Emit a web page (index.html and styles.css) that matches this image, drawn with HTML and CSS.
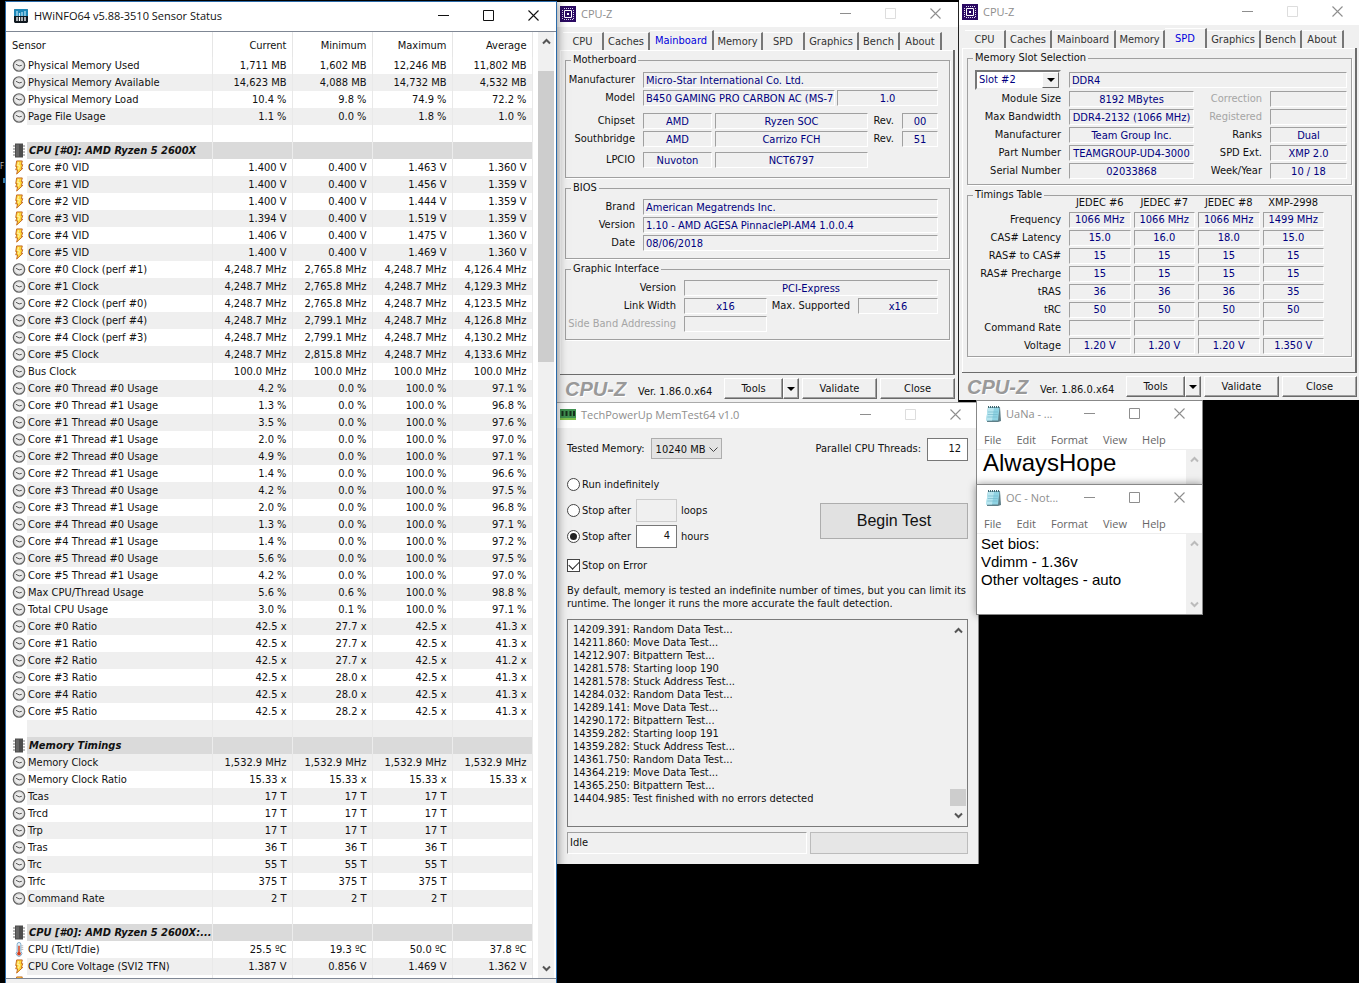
FILE: index.html
```html
<!DOCTYPE html>
<html lang="en">
<head>
<meta charset="utf-8">
<title>Desktop</title>
<link rel="stylesheet" href="styles.css">
</head>
<body>
<svg class="defs" aria-hidden="true">
  <symbol id="min" viewBox="0 0 11 11"><path d="M0 5.5h11" stroke="currentColor" fill="none"/></symbol>
  <symbol id="max" viewBox="0 0 11 11"><path d="M.5 .5h10v10h-10z" stroke="currentColor" fill="none"/></symbol>
  <symbol id="x" viewBox="0 0 11 11"><path d="M.5 .5l10 10M10.5 .5l-10 10" stroke="currentColor" stroke-width="1.1" fill="none"/></symbol>
  <symbol id="up" viewBox="0 0 9 7"><path d="M1 5.5l3.500-3.500 3.500 3.500" stroke="currentColor" stroke-width="2" fill="none"/></symbol>
  <symbol id="down" viewBox="0 0 9 7"><path d="M1 1.500l3.500 3.500 3.500-3.500" stroke="currentColor" stroke-width="2" fill="none"/></symbol>
  <symbol id="clock" viewBox="0 0 14 14"><circle cx="7" cy="7" r="5.600" fill="#ececec" stroke="#666" stroke-width="1.400"/><circle cx="7" cy="7" r="4.300" fill="none" stroke="#cfcfcf" stroke-width=".8"/><path d="M4 5.800l3.200 1.600 2.600-.6" stroke="#555" fill="none"/></symbol>
  <symbol id="bolt" viewBox="0 0 14 16"><path d="M4.500 1h6L9.500 5h1.500L9.500 9h1.500L4.500 15l1-4.500H3.500L4.800 7H3.500z" fill="#ffd83a" stroke="#c2641c" stroke-linejoin="round"/><path d="M6.500 2.500L5.500 6H7.500L6.500 10" stroke="#fff6b8" fill="none"/></symbol>
  <symbol id="chip" viewBox="0 0 14 14"><path d="M1 2.500h12M1 5.500h12M1 8.500h12M1 11.500h12" stroke="#a2a2a2" stroke-width="1.400"/><path d="M3 0h8v14H3z" fill="#4c4c4c"/><path d="M4 1h3v12H4z" fill="#656565"/></symbol>
  <symbol id="therm" viewBox="0 0 14 16"><path d="M5 2.500a2 2 0 0 1 4 0V10a3 3 0 1 1-4 0z" fill="#e6f2fb" stroke="#7aa6c8"/><path d="M7 4v8" stroke="#d3401e" stroke-width="1.600"/><circle cx="7" cy="12.300" r="2" fill="#d3401e"/><path d="M9.500 4h2M9.500 6h2M9.500 8h2" stroke="#999" stroke-width=".7"/></symbol>
  <symbol id="cpuz" viewBox="0 0 16 16"><path d="M0 0h16v16H0z" fill="#2b0a63"/><path d="M4.500 4.500h7v7h-7z" fill="none" stroke="#fff"/><path d="M7 7h2v2H7z" fill="#fff"/><path d="M4 2.500h9M4 13.500h9" stroke="#e4dcf4" stroke-dasharray="1 1"/><path d="M2.500 4v9M13.500 4v9" stroke="#e4dcf4" stroke-dasharray="1 1"/></symbol>
  <symbol id="note" viewBox="0 0 18 18"><path d="M4 2h12l1 14-3 1H3z" fill="#5f7f88"/><path d="M4 2.500h11.500L14 15.500H2z" fill="#8fd3e3"/><path d="M4 3h6L8 15.500H2z" fill="#b8e6f0"/><path d="M4 7h10M3.700 9.500h10M3.300 12h10" stroke="#74b9cc" stroke-width=".7"/><path d="M4 2h12" stroke="#3f6670" stroke-width="2" stroke-dasharray="1 1"/></symbol>
</svg>

<main class="desktop">
<div class="shortcut"><span>F</span><i></i></div>

<section class="window hwinfo" aria-label="HWiNFO64 Sensor Status">
  <header class="titlebar">
    <svg class="app" viewBox="0 0 14 14"><path d="M1 0h12l1 1v12l-1 1H1l-1-1V1z" fill="#101820"/><path d="M1 0h12l1 1v6H0V1z" fill="#1d87b8"/><path d="M3 2v5M5.500 4v3M8 3v4M11 2v5" stroke="#bfe8f8" stroke-width="1.200"/><path d="M3 8v4M5.500 8v4M8 8v4M11 8v4" stroke="#fff" stroke-width="1.300"/></svg>
    <h1>HWiNFO64 v5.88-3510 Sensor Status</h1>
    <div class="caption"><button aria-label="Minimize"><svg><use href="#min"/></svg></button><button aria-label="Maximize"><svg><use href="#max"/></svg></button><button aria-label="Close"><svg><use href="#x"/></svg></button></div>
  </header>
  <div class="sensor-view">
    <div class="sensor-list">
    <table class="sensors">
      <colgroup><col class="c-icon"><col class="c-name"><col class="c-val"><col class="c-val"><col class="c-val"><col class="c-val"></colgroup>
      <thead><tr><th colspan="2">Sensor</th><th>Current</th><th>Minimum</th><th>Maximum</th><th>Average</th></tr></thead>
      <tbody>
      <tr><td><svg><use href="#clock"/></svg></td><td>Physical Memory Used</td><td>1,711 MB</td><td>1,602 MB</td><td>12,246 MB</td><td>11,802 MB</td></tr>
      <tr><td><svg><use href="#clock"/></svg></td><td>Physical Memory Available</td><td>14,623 MB</td><td>4,088 MB</td><td>14,732 MB</td><td>4,532 MB</td></tr>
      <tr><td><svg><use href="#clock"/></svg></td><td>Physical Memory Load</td><td>10.4 %</td><td>9.8 %</td><td>74.9 %</td><td>72.2 %</td></tr>
      <tr><td><svg><use href="#clock"/></svg></td><td>Page File Usage</td><td>1.1 %</td><td>0.0 %</td><td>1.8 %</td><td>1.0 %</td></tr>
      <tr><td></td><td></td><td></td><td></td><td></td><td></td></tr>
      <tr class="group"><td><svg><use href="#chip"/></svg></td><td>CPU [#0]: AMD Ryzen 5 2600X</td><td></td><td></td><td></td><td></td></tr>
      <tr><td><svg><use href="#bolt"/></svg></td><td>Core #0 VID</td><td>1.400 V</td><td>0.400 V</td><td>1.463 V</td><td>1.360 V</td></tr>
      <tr><td><svg><use href="#bolt"/></svg></td><td>Core #1 VID</td><td>1.400 V</td><td>0.400 V</td><td>1.456 V</td><td>1.359 V</td></tr>
      <tr><td><svg><use href="#bolt"/></svg></td><td>Core #2 VID</td><td>1.400 V</td><td>0.400 V</td><td>1.444 V</td><td>1.359 V</td></tr>
      <tr><td><svg><use href="#bolt"/></svg></td><td>Core #3 VID</td><td>1.394 V</td><td>0.400 V</td><td>1.519 V</td><td>1.359 V</td></tr>
      <tr><td><svg><use href="#bolt"/></svg></td><td>Core #4 VID</td><td>1.406 V</td><td>0.400 V</td><td>1.475 V</td><td>1.360 V</td></tr>
      <tr><td><svg><use href="#bolt"/></svg></td><td>Core #5 VID</td><td>1.400 V</td><td>0.400 V</td><td>1.469 V</td><td>1.360 V</td></tr>
      <tr><td><svg><use href="#clock"/></svg></td><td>Core #0 Clock (perf #1)</td><td>4,248.7 MHz</td><td>2,765.8 MHz</td><td>4,248.7 MHz</td><td>4,126.4 MHz</td></tr>
      <tr><td><svg><use href="#clock"/></svg></td><td>Core #1 Clock</td><td>4,248.7 MHz</td><td>2,765.8 MHz</td><td>4,248.7 MHz</td><td>4,129.3 MHz</td></tr>
      <tr><td><svg><use href="#clock"/></svg></td><td>Core #2 Clock (perf #0)</td><td>4,248.7 MHz</td><td>2,765.8 MHz</td><td>4,248.7 MHz</td><td>4,123.5 MHz</td></tr>
      <tr><td><svg><use href="#clock"/></svg></td><td>Core #3 Clock (perf #4)</td><td>4,248.7 MHz</td><td>2,799.1 MHz</td><td>4,248.7 MHz</td><td>4,126.8 MHz</td></tr>
      <tr><td><svg><use href="#clock"/></svg></td><td>Core #4 Clock (perf #3)</td><td>4,248.7 MHz</td><td>2,799.1 MHz</td><td>4,248.7 MHz</td><td>4,130.2 MHz</td></tr>
      <tr><td><svg><use href="#clock"/></svg></td><td>Core #5 Clock</td><td>4,248.7 MHz</td><td>2,815.8 MHz</td><td>4,248.7 MHz</td><td>4,133.6 MHz</td></tr>
      <tr><td><svg><use href="#clock"/></svg></td><td>Bus Clock</td><td>100.0 MHz</td><td>100.0 MHz</td><td>100.0 MHz</td><td>100.0 MHz</td></tr>
      <tr><td><svg><use href="#clock"/></svg></td><td>Core #0 Thread #0 Usage</td><td>4.2 %</td><td>0.0 %</td><td>100.0 %</td><td>97.1 %</td></tr>
      <tr><td><svg><use href="#clock"/></svg></td><td>Core #0 Thread #1 Usage</td><td>1.3 %</td><td>0.0 %</td><td>100.0 %</td><td>96.8 %</td></tr>
      <tr><td><svg><use href="#clock"/></svg></td><td>Core #1 Thread #0 Usage</td><td>3.5 %</td><td>0.0 %</td><td>100.0 %</td><td>97.6 %</td></tr>
      <tr><td><svg><use href="#clock"/></svg></td><td>Core #1 Thread #1 Usage</td><td>2.0 %</td><td>0.0 %</td><td>100.0 %</td><td>97.0 %</td></tr>
      <tr><td><svg><use href="#clock"/></svg></td><td>Core #2 Thread #0 Usage</td><td>4.9 %</td><td>0.0 %</td><td>100.0 %</td><td>97.1 %</td></tr>
      <tr><td><svg><use href="#clock"/></svg></td><td>Core #2 Thread #1 Usage</td><td>1.4 %</td><td>0.0 %</td><td>100.0 %</td><td>96.6 %</td></tr>
      <tr><td><svg><use href="#clock"/></svg></td><td>Core #3 Thread #0 Usage</td><td>4.2 %</td><td>0.0 %</td><td>100.0 %</td><td>97.5 %</td></tr>
      <tr><td><svg><use href="#clock"/></svg></td><td>Core #3 Thread #1 Usage</td><td>2.0 %</td><td>0.0 %</td><td>100.0 %</td><td>96.8 %</td></tr>
      <tr><td><svg><use href="#clock"/></svg></td><td>Core #4 Thread #0 Usage</td><td>1.3 %</td><td>0.0 %</td><td>100.0 %</td><td>97.1 %</td></tr>
      <tr><td><svg><use href="#clock"/></svg></td><td>Core #4 Thread #1 Usage</td><td>1.4 %</td><td>0.0 %</td><td>100.0 %</td><td>97.2 %</td></tr>
      <tr><td><svg><use href="#clock"/></svg></td><td>Core #5 Thread #0 Usage</td><td>5.6 %</td><td>0.0 %</td><td>100.0 %</td><td>97.5 %</td></tr>
      <tr><td><svg><use href="#clock"/></svg></td><td>Core #5 Thread #1 Usage</td><td>4.2 %</td><td>0.0 %</td><td>100.0 %</td><td>97.0 %</td></tr>
      <tr><td><svg><use href="#clock"/></svg></td><td>Max CPU/Thread Usage</td><td>5.6 %</td><td>0.6 %</td><td>100.0 %</td><td>98.8 %</td></tr>
      <tr><td><svg><use href="#clock"/></svg></td><td>Total CPU Usage</td><td>3.0 %</td><td>0.1 %</td><td>100.0 %</td><td>97.1 %</td></tr>
      <tr><td><svg><use href="#clock"/></svg></td><td>Core #0 Ratio</td><td>42.5 x</td><td>27.7 x</td><td>42.5 x</td><td>41.3 x</td></tr>
      <tr><td><svg><use href="#clock"/></svg></td><td>Core #1 Ratio</td><td>42.5 x</td><td>27.7 x</td><td>42.5 x</td><td>41.3 x</td></tr>
      <tr><td><svg><use href="#clock"/></svg></td><td>Core #2 Ratio</td><td>42.5 x</td><td>27.7 x</td><td>42.5 x</td><td>41.2 x</td></tr>
      <tr><td><svg><use href="#clock"/></svg></td><td>Core #3 Ratio</td><td>42.5 x</td><td>28.0 x</td><td>42.5 x</td><td>41.3 x</td></tr>
      <tr><td><svg><use href="#clock"/></svg></td><td>Core #4 Ratio</td><td>42.5 x</td><td>28.0 x</td><td>42.5 x</td><td>41.3 x</td></tr>
      <tr><td><svg><use href="#clock"/></svg></td><td>Core #5 Ratio</td><td>42.5 x</td><td>28.2 x</td><td>42.5 x</td><td>41.3 x</td></tr>
      <tr><td></td><td></td><td></td><td></td><td></td><td></td></tr>
      <tr class="group"><td><svg><use href="#chip"/></svg></td><td>Memory Timings</td><td></td><td></td><td></td><td></td></tr>
      <tr><td><svg><use href="#clock"/></svg></td><td>Memory Clock</td><td>1,532.9 MHz</td><td>1,532.9 MHz</td><td>1,532.9 MHz</td><td>1,532.9 MHz</td></tr>
      <tr><td><svg><use href="#clock"/></svg></td><td>Memory Clock Ratio</td><td>15.33 x</td><td>15.33 x</td><td>15.33 x</td><td>15.33 x</td></tr>
      <tr><td><svg><use href="#clock"/></svg></td><td>Tcas</td><td>17 T</td><td>17 T</td><td>17 T</td><td></td></tr>
      <tr><td><svg><use href="#clock"/></svg></td><td>Trcd</td><td>17 T</td><td>17 T</td><td>17 T</td><td></td></tr>
      <tr><td><svg><use href="#clock"/></svg></td><td>Trp</td><td>17 T</td><td>17 T</td><td>17 T</td><td></td></tr>
      <tr><td><svg><use href="#clock"/></svg></td><td>Tras</td><td>36 T</td><td>36 T</td><td>36 T</td><td></td></tr>
      <tr><td><svg><use href="#clock"/></svg></td><td>Trc</td><td>55 T</td><td>55 T</td><td>55 T</td><td></td></tr>
      <tr><td><svg><use href="#clock"/></svg></td><td>Trfc</td><td>375 T</td><td>375 T</td><td>375 T</td><td></td></tr>
      <tr><td><svg><use href="#clock"/></svg></td><td>Command Rate</td><td>2 T</td><td>2 T</td><td>2 T</td><td></td></tr>
      <tr><td></td><td></td><td></td><td></td><td></td><td></td></tr>
      <tr class="group"><td><svg><use href="#chip"/></svg></td><td>CPU [#0]: AMD Ryzen 5 2600X:...</td><td></td><td></td><td></td><td></td></tr>
      <tr><td><svg><use href="#therm"/></svg></td><td>CPU (Tctl/Tdie)</td><td>25.5 ºC</td><td>19.3 ºC</td><td>50.0 ºC</td><td>37.8 ºC</td></tr>
      <tr><td><svg><use href="#bolt"/></svg></td><td>CPU Core Voltage (SVI2 TFN)</td><td>1.387 V</td><td>0.856 V</td><td>1.469 V</td><td>1.362 V</td></tr>
      <tr><td><svg><use href="#bolt"/></svg></td><td></td><td></td><td></td><td></td><td></td></tr>
      </tbody>
    </table>
    </div>
    <div class="scroll main-scroll"><svg><use href="#up"/></svg><div class="track"><div class="thumb"></div></div><svg><use href="#down"/></svg></div>
  </div>
</section>

<section class="window cpuz mainboard" aria-label="CPU-Z Mainboard">
  <header class="titlebar inactive">
    <svg class="app"><use href="#cpuz"/></svg>
    <h1>CPU-Z</h1>
    <div class="caption"><button aria-label="Minimize"><svg><use href="#min"/></svg></button><button aria-label="Maximize" disabled><svg><use href="#max"/></svg></button><button aria-label="Close"><svg><use href="#x"/></svg></button></div>
  </header>
  <nav class="tabs" role="tablist"><button role="tab">CPU</button><button role="tab">Caches</button><button role="tab" aria-selected="true">Mainboard</button><button role="tab">Memory</button><button role="tab">SPD</button><button role="tab">Graphics</button><button role="tab">Bench</button><button role="tab">About</button></nav>
  <div class="panel">
    <fieldset>
      <legend>Motherboard</legend>
      <div class="form board">
        <label for="mf">Manufacturer</label><input class="all" id="mf" readonly value="Micro-Star International Co. Ltd.">
        <label for="md">Model</label><div class="all model"><input id="md" readonly value="B450 GAMING PRO CARBON AC (MS-7"><input class="mid" aria-label="Model revision" readonly value="1.0"></div>
        <label class="gap" for="cs">Chipset</label><input class="mid gap" id="cs" readonly value="AMD"><input class="mid gap" aria-label="Chipset model" readonly value="Ryzen SOC"><label class="gap" for="r1">Rev.</label><input class="mid gap" id="r1" readonly value="00">
        <label for="sb">Southbridge</label><input class="mid" id="sb" readonly value="AMD"><input class="mid" aria-label="Southbridge model" readonly value="Carrizo FCH"><label for="r2">Rev.</label><input class="mid" id="r2" readonly value="51">
        <label class="lpc" for="lp">LPCIO</label><input class="mid lpc" id="lp" readonly value="Nuvoton"><input class="mid lpc" aria-label="LPCIO model" readonly value="NCT6797">
      </div>
    </fieldset>
    <fieldset>
      <legend>BIOS</legend>
      <div class="form bios">
        <label for="br">Brand</label><input id="br" readonly value="American Megatrends Inc.">
        <label for="ve">Version</label><input id="ve" readonly value="1.10 - AMD AGESA PinnaclePI-AM4 1.0.0.4">
        <label for="da">Date</label><input id="da" readonly value="08/06/2018">
      </div>
    </fieldset>
    <fieldset>
      <legend>Graphic Interface</legend>
      <div class="form graphic">
        <label for="gv">Version</label><input class="mid all" id="gv" readonly value="PCI-Express">
        <label for="lw">Link Width</label><input class="mid" id="lw" readonly value="x16"><label for="ms">Max. Supported</label><input class="mid" id="ms" readonly value="x16">
        <label class="off" for="sba">Side Band Addressing</label><input id="sba" disabled>
      </div>
    </fieldset>
  </div>
  <footer class="bar"><strong>CPU-Z</strong><span>Ver. 1.86.0.x64</span><div class="split"><button>Tools</button><button aria-label="Tools menu"><i></i></button></div><button>Validate</button><button>Close</button></footer>
</section>

<section class="window cpuz spd" aria-label="CPU-Z SPD">
  <header class="titlebar inactive">
    <svg class="app"><use href="#cpuz"/></svg>
    <h1>CPU-Z</h1>
    <div class="caption"><button aria-label="Minimize"><svg><use href="#min"/></svg></button><button aria-label="Maximize" disabled><svg><use href="#max"/></svg></button><button aria-label="Close"><svg><use href="#x"/></svg></button></div>
  </header>
  <nav class="tabs" role="tablist"><button role="tab">CPU</button><button role="tab">Caches</button><button role="tab">Mainboard</button><button role="tab">Memory</button><button role="tab" aria-selected="true">SPD</button><button role="tab">Graphics</button><button role="tab">Bench</button><button role="tab">About</button></nav>
  <div class="panel">
    <fieldset>
      <legend>Memory Slot Selection</legend>
      <div class="slot">
        <div class="slot-select"><select aria-label="Memory slot"><option>Slot #2</option></select><b><i></i></b></div>
        <input aria-label="Memory type" readonly value="DDR4">
      </div>
      <div class="form module">
        <label for="sz">Module Size</label><input class="mid" id="sz" readonly value="8192 MBytes"><label class="off" for="co">Correction</label><input id="co" disabled>
        <label for="bw">Max Bandwidth</label><input class="mid" id="bw" readonly value="DDR4-2132 (1066 MHz)"><label class="off" for="rg">Registered</label><input id="rg" disabled>
        <label for="mm">Manufacturer</label><input class="mid" id="mm" readonly value="Team Group Inc."><label for="ra">Ranks</label><input class="mid" id="ra" readonly value="Dual">
        <label for="pn">Part Number</label><input class="mid" id="pn" readonly value="TEAMGROUP-UD4-3000"><label for="ex">SPD Ext.</label><input class="mid" id="ex" readonly value="XMP 2.0">
        <label for="sn">Serial Number</label><input class="mid" id="sn" readonly value="02033868"><label for="wk">Week/Year</label><input class="mid" id="wk" readonly value="10 / 18">
      </div>
    </fieldset>
    <fieldset class="timing-box">
      <legend>Timings Table</legend>
      <table class="timings">
        <thead><tr><td></td><th>JEDEC #6</th><th>JEDEC #7</th><th>JEDEC #8</th><th>XMP-2998</th></tr></thead>
        <tbody>
        <tr><th>Frequency</th><td>1066 MHz</td><td>1066 MHz</td><td>1066 MHz</td><td>1499 MHz</td></tr>
        <tr><th>CAS# Latency</th><td>15.0</td><td>16.0</td><td>18.0</td><td>15.0</td></tr>
        <tr><th>RAS# to CAS#</th><td>15</td><td>15</td><td>15</td><td>15</td></tr>
        <tr><th>RAS# Precharge</th><td>15</td><td>15</td><td>15</td><td>15</td></tr>
        <tr><th>tRAS</th><td>36</td><td>36</td><td>36</td><td>35</td></tr>
        <tr><th>tRC</th><td>50</td><td>50</td><td>50</td><td>50</td></tr>
        <tr><th>Command Rate</th><td></td><td></td><td></td><td></td></tr>
        <tr><th>Voltage</th><td>1.20 V</td><td>1.20 V</td><td>1.20 V</td><td>1.350 V</td></tr>
        </tbody>
      </table>
    </fieldset>
  </div>
  <footer class="bar"><strong>CPU-Z</strong><span>Ver. 1.86.0.x64</span><div class="split"><button>Tools</button><button aria-label="Tools menu"><i></i></button></div><button>Validate</button><button>Close</button></footer>
</section>

<section class="window memtest" aria-label="TechPowerUp MemTest64">
  <header class="titlebar inactive">
    <svg class="app" viewBox="0 0 16 16"><path d="M0 2h16v10H0z" fill="#3f9150"/><path d="M0 11h16v2H0z" fill="#7cc04b"/><path d="M1.500 4h2v5h-2zM5.500 4h2v5h-2zM9.500 4h2v5h-2zM13 4h2v5h-2z" fill="#17301c"/></svg>
    <h1>TechPowerUp MemTest64 v1.0</h1>
    <div class="caption"><button aria-label="Minimize"><svg><use href="#min"/></svg></button><button aria-label="Maximize" disabled><svg><use href="#max"/></svg></button><button aria-label="Close"><svg><use href="#x"/></svg></button></div>
  </header>
  <div class="memtest-body">
    <div class="top-row">
      <label for="tm">Tested Memory:</label>
      <div class="drop"><select id="tm"><option>10240 MB</option></select><svg viewBox="0 0 9 7"><path d="M.5 1.500l4 4 4-4" stroke="#444" fill="none"/></svg></div>
      <label class="threads" for="pt">Parallel CPU Threads:</label><input class="num" id="pt" value="12">
    </div>
    <div class="run-row">
      <div class="modes">
        <label><input type="radio" name="mode">Run indefinitely</label>
        <div class="mode"><label><input type="radio" name="mode">Stop after</label><input class="num" aria-label="Loops" disabled><span>loops</span></div>
        <div class="mode"><label><input type="radio" name="mode" checked>Stop after</label><input class="num" aria-label="Hours" value="4"><span>hours</span></div>
        <label class="err"><input type="checkbox" checked>Stop on Error</label>
      </div>
      <button class="begin">Begin Test</button>
    </div>
    <p>By default, memory is tested an indefinite number of times, but you can limit its<br>runtime. The longer it runs the more accurate the fault detection.</p>
    <div class="log">
      <textarea aria-label="Log" readonly>14209.391: Random Data Test...
14211.860: Move Data Test...
14212.907: Bitpattern Test...
14281.578: Starting loop 190
14281.578: Stuck Address Test...
14284.032: Random Data Test...
14289.141: Move Data Test...
14290.172: Bitpattern Test...
14359.282: Starting loop 191
14359.282: Stuck Address Test...
14361.750: Random Data Test...
14364.219: Move Data Test...
14365.250: Bitpattern Test...
14404.985: Test finished with no errors detected</textarea>
      <div class="scroll log-scroll"><svg><use href="#up"/></svg><div class="track"><div class="thumb"></div></div><svg><use href="#down"/></svg></div>
    </div>
    <div class="status"><output>Idle</output><div class="progress" role="progressbar" aria-label="Progress"></div></div>
  </div>
</section>

<section class="window notepad first" aria-label="UaNa - Notepad">
  <header class="titlebar inactive">
    <svg class="app"><use href="#note"/></svg><h1>UaNa - ...</h1>
    <div class="caption"><button aria-label="Minimize"><svg><use href="#min"/></svg></button><button aria-label="Maximize"><svg><use href="#max"/></svg></button><button aria-label="Close"><svg><use href="#x"/></svg></button></div>
  </header>
  <nav class="menu"><button>File</button><button>Edit</button><button>Format</button><button>View</button><button>Help</button></nav>
  <div class="page"><textarea class="big" aria-label="Text">AlwaysHope</textarea><div class="scroll pale"><svg><use href="#up"/></svg><div class="track"></div></div></div>
</section>

<section class="window notepad second" aria-label="OC - Notepad">
  <header class="titlebar inactive">
    <svg class="app"><use href="#note"/></svg><h1>OC - Not...</h1>
    <div class="caption"><button aria-label="Minimize"><svg><use href="#min"/></svg></button><button aria-label="Maximize"><svg><use href="#max"/></svg></button><button aria-label="Close"><svg><use href="#x"/></svg></button></div>
  </header>
  <nav class="menu"><button>File</button><button>Edit</button><button>Format</button><button>View</button><button>Help</button></nav>
  <div class="page"><textarea aria-label="Text">Set bios:
Vdimm - 1.36v
Other voltages - auto</textarea><div class="scroll pale"><svg><use href="#up"/></svg><div class="track"></div><svg><use href="#down"/></svg></div></div>
</section>
</main>
</body>
</html>
```
FILE: styles.css
```css
* { box-sizing: border-box; }
html, body { height: 100%; margin: 0; }
body {
  background: #000;
  color: #111;
  font: 11px/14px "DejaVu Sans Condensed", "DejaVu Sans", sans-serif;
  overflow: hidden;
}
button, input, select, textarea { font: inherit; color: inherit; margin: 0; }
button { border: 0; background: none; padding: 0; }
.defs { position: absolute; width: 0; height: 0; }

.desktop { position: relative; height: 100%; min-height: 983px; }
.shortcut { position: absolute; left: 0; top: 160px; font-size: 8px; color: #ccc; }
.shortcut i { display: block; width: 2px; height: 5px; margin: 4px 0 0 3px; background: #4a9bd0; }

.window { position: absolute; display: flex; flex-direction: column; }

/* Title bars */
.titlebar {
  display: flex;
  align-items: center;
  gap: 5px;
  height: 25px;
  padding: 0 0 2px 3px;
  background: #fff;
  flex: none;
}
.titlebar h1 {
  flex: 1;
  margin: 0;
  font: 11px/16px "Open Sans", "Noto Sans", sans-serif;
  white-space: nowrap;
}
.app { width: 16px; height: 16px; flex: none; }
.caption { display: flex; }
.caption button { width: 45px; height: 23px; display: grid; place-items: center; }
.caption svg { width: 11px; height: 11px; }
.inactive { color: #8e8e8e; }
.inactive button:disabled { color: #ddd; }

/* Scroll bars */
.scroll { display: flex; flex-direction: column; align-items: center; width: 16px; flex: none; background: #f0f0f0; color: #555; }
.scroll svg { width: 9px; height: 7px; margin: 6px 0; flex: none; }
.scroll .track { flex: 1; align-self: stretch; display: flex; flex-direction: column; }
.scroll .thumb { background: #cdcdcd; }
.pale { color: #bbb; }

/* Sensor window */
.hwinfo {
  left: 5px; top: 1px; bottom: 0; width: 552px;
  z-index: 5;
  background: #f0f0f0;
  border: 1px solid #2a6aa9;
  border-bottom: 0;
  box-shadow: 0 0 10px rgba(0, 0, 0, .5);
}
.hwinfo .titlebar { height: 29px; padding-left: 8px; gap: 6px; }
.hwinfo .app { width: 14px; height: 14px; }
.sensor-view {
  flex: 1;
  min-height: 0;
  display: flex;
  margin-bottom: 4px;
  padding: 0 2px;
  background: #fff;
  border-top: 1px solid #7f8794;
  border-bottom: 1px solid #7f8794;
}
.sensor-list { flex: 1; overflow: hidden; }
.sensors { width: 524px; table-layout: fixed; border-collapse: collapse; }
.c-icon { width: 19px; }
.c-name { width: 185px; }
.c-val { width: 80px; }
.sensors th { height: 25px; padding: 3px 5px 0 4px; font-weight: normal; text-align: right; border-right: 1px solid #e6e6e6; }
.sensors th:first-child { text-align: left; }
.sensors td { height: 17px; padding: 0 5px 0 0; line-height: 17px; text-align: right; white-space: nowrap; border-right: 1px solid #e9e9e9; }
.sensors td:first-child { padding: 0 0 0 4px; border: 0; background: #fff; }
.sensors td:nth-child(2) { padding: 0 0 0 1px; text-align: left; }
.sensors td svg { display: block; width: 14px; height: 15px; }
.sensors tr:nth-child(even) td:not(:first-child) { background: #efefef; }
.sensors tr.group td:not(:first-child) { background: #dadada; border-color: #ececec; }
.sensors tr.group td:nth-child(2) { padding-left: 2px; font-weight: bold; font-style: italic; }
.main-scroll .track { padding-top: 20px; }
.main-scroll .thumb { height: 291px; }

/* CPU-Z windows */
.cpuz { background: #f0f0f0; width: 402px; }
.mainboard { left: 557px; top: 2px; border-right: 1px solid #222; }
.spd { left: 959px; top: 0; width: 401px; }
.tabs { display: flex; align-items: flex-end; height: 23px; padding-left: 6px; }
.tabs button { height: 18px; border-right: 2px solid #777; border-top: 1px solid #fff; color: #333; text-align: center; }
.tabs button:nth-child(1) { width: 41px; }
.tabs button:nth-child(2) { width: 46px; }
.tabs button:nth-child(3) { width: 64px; }
.tabs button:nth-child(4) { width: 49px; }
.tabs button:nth-child(5) { width: 42px; }
.tabs button:nth-child(6) { width: 54px; }
.tabs button:nth-child(7) { width: 41px; }
.tabs button:nth-child(8) { width: 42px; }
.tabs button[aria-selected] { height: 20px; color: #0000dc; }
.panel {
  display: flex;
  flex-direction: column;
  gap: 3px;
  height: 325px;
  margin: 0 3px;
  padding: 3px 3px 0 5px;
  border: solid #6c6c6c;
  border-width: 0 2px 1px 0;
  box-shadow: inset 1px 1px #fff;
}
fieldset {
  margin: 0;
  padding: 5px 11px 5px 0;
  min-width: 0;
  border: 1px solid #a0a0a0;
  box-shadow: 1px 1px #fff;
}
.mainboard fieldset:not(:first-child) { padding-top: 4px; padding-bottom: 7px; }
legend { margin-left: 5px; padding: 0 2px; line-height: 14px; }
.form { display: grid; gap: 2px 3px; }
.form label { text-align: right; line-height: 16px; padding-right: 5px; white-space: nowrap; }
.cpuz input, .timings tbody td {
  width: 100%;
  min-width: 0;
  height: 16px;
  padding: 0 0 0 2px;
  border: 1px solid;
  border-color: #a0a0a0 #fff #fff #a0a0a0;
  border-radius: 0;
  background: #f0f0f0;
  color: #00007f;
  line-height: 14px;
}
.cpuz input.mid { text-align: center; padding: 0; }
.form .off { color: #a5a5a5; }
.board { grid-template-columns: 74px 69px 1fr 28px 36px; padding-bottom: 4px; }
.board .all { grid-column: 2 / -1; }
.model { display: grid; grid-template-columns: 192px 1fr; gap: 2px; }
.form .gap { margin-top: 5px; }
.form .lpc { margin-top: 3px; }
.bios { grid-template-columns: 74px 1fr; }
.graphic { grid-template-columns: 115px 83px 1fr 80px; }
.graphic .all { grid-column: 2 / -1; }

.bar { display: flex; align-items: center; gap: 3px; height: 27px; padding: 0 3px 0 8px; }
.bar strong { width: 70px; font: italic bold 20px/24px "Liberation Sans", Arial, sans-serif; color: #999; text-shadow: 1px 1px #fff; }
.bar span { flex: 1; padding-top: 6px; white-space: nowrap; }
.bar button { width: 75px; height: 21px; background: #f0f0f0; border: 1px solid; border-color: #fff #696969 #696969 #fff; box-shadow: inset -1px -1px #a0a0a0; }
.split { display: flex; }
.split button:first-child { width: 59px; }
.split button:last-child { width: 16px; display: grid; place-items: center; }
.split i, .slot-select i { border: solid transparent; border-width: 4px 4px 0; border-top-color: #000; }

.slot { display: grid; grid-template-columns: 86px 1fr; gap: 8px; align-items: center; padding-left: 7px; margin-bottom: 1px; }
.slot-select { display: flex; height: 20px; border: 2px solid; border-color: #777 #eee #eee #777; background: #fff; }
.slot-select select { flex: 1; min-width: 0; appearance: none; border: 0; background: #fff; color: #00007f; padding: 0 2px; }
.slot-select b { display: grid; place-items: center; width: 17px; background: #f0f0f0; border: 1px solid; border-color: #fff #696969 #696969 #fff; }
.spd fieldset { padding-right: 4px; }
.module { grid-template-columns: 98px 125px 1fr 77px; }
.spd .timing-box { padding-top: 0; padding-bottom: 0; }
.timings { border-collapse: separate; border-spacing: 3px 2px; width: 362px; table-layout: fixed; margin: -8px 0 0 -3px; }
.timings th { font-weight: normal; padding: 0; line-height: 14px; white-space: nowrap; }
.timings thead td { width: 98px; }
.timings tbody th { text-align: right; padding-right: 5px; }
.timings tbody td { text-align: center; padding: 0; }

/* MemTest window */
.memtest { left: 557px; top: 402px; width: 422px; background: #f0f0f0; border-top: 1px solid #aaa; border-right: 1px solid #888; }
.memtest-body { padding: 10px 10px 10px; }
.top-row { display: flex; align-items: flex-start; line-height: 22px; }
.drop { position: relative; margin-left: 6px; }
.drop select { width: 71px; height: 21px; padding: 0 4px; appearance: none; background: #e3e3e3; border: 1px solid #adadad; border-radius: 0; }
.drop svg { position: absolute; right: 4px; top: 8px; width: 9px; height: 7px; }
.threads { margin-left: auto; }
.num { width: 41px; height: 23px; padding: 0 6px 2px; text-align: right; background: #fff; border: 1px solid #777; border-radius: 0; }
.num:disabled { background: #f0f0f0; border-color: #ccc; }
.top-row .num { margin-left: 6px; }
.run-row { display: flex; justify-content: space-between; align-items: center; margin-top: 12px; }
.modes { display: grid; gap: 3px; }
.modes label { display: flex; align-items: center; gap: 2px; height: 23px; }
.mode { display: flex; align-items: center; }
.mode label { width: 69px; }
.mode span { margin-left: 4px; }
.modes .err { margin-top: 3px; }
.modes [type] { appearance: none; width: 13px; height: 13px; background: #fff; border: 1px solid #444; display: grid; place-items: center; }
.modes [type=radio] { border-radius: 50%; }
.modes [type=radio]:checked::before { content: ""; width: 7px; height: 7px; border-radius: 50%; background: #222; }
.modes [type=checkbox]:checked::before { content: ""; width: 9px; height: 5px; border: solid #222; border-width: 0 0 1px 1px; transform: translateY(-2px) rotate(-45deg); }
.begin { width: 148px; height: 36px; margin-bottom: 8px; background: #e1e1e1; border: 1px solid #adadad; font: 16px/20px "Liberation Sans", Arial, sans-serif; }
.memtest p { margin: 7px 0 9px; line-height: 13px; white-space: nowrap; }
.log { display: flex; height: 208px; padding: 1px; border: 1px solid #7a7a7a; }
.log textarea { flex: 1; height: 100%; padding: 2px 4px; border: 0; resize: none; overflow: hidden; background: #f0f0f0; line-height: 13px; outline: 0; }
.log-scroll .track { justify-content: flex-end; }
.log-scroll .thumb { height: 17px; }
.status { display: grid; grid-template-columns: 240px 1fr; gap: 3px; margin-top: 5px; }
.status output { height: 22px; padding: 0 2px; line-height: 20px; border: 1px solid; border-color: #a0a0a0 #fff #fff #a0a0a0; }
.progress { background: #e6e6e6; border: 1px solid #bcbcbc; }

/* Notepad windows */
.notepad { left: 976px; width: 227px; background: #fff; border: 1px solid #888; z-index: 3; }
.first { top: 400px; height: 86px; }
.second { top: 484px; height: 131px; box-shadow: 0 0 8px rgba(0, 0, 0, .4); }
.notepad .titlebar { height: 27px; padding-left: 7px; gap: 4px; }
.notepad .app { width: 18px; height: 18px; }
.menu { display: flex; gap: 15px; height: 21px; padding-left: 7px; font: 11px/24px "Open Sans", "Noto Sans", sans-serif; color: #666; }
.page { display: flex; flex: 1; min-height: 0; border-top: 1px solid #eee; }
.page textarea { flex: 1; min-width: 0; border: 0; outline: 0; resize: none; overflow: hidden; padding: 1px 4px; color: #000; font: 15px/18px "Liberation Sans", Arial, sans-serif; }
.page .big { padding: 0 6px; font-size: 24px; line-height: 26px; }
```
